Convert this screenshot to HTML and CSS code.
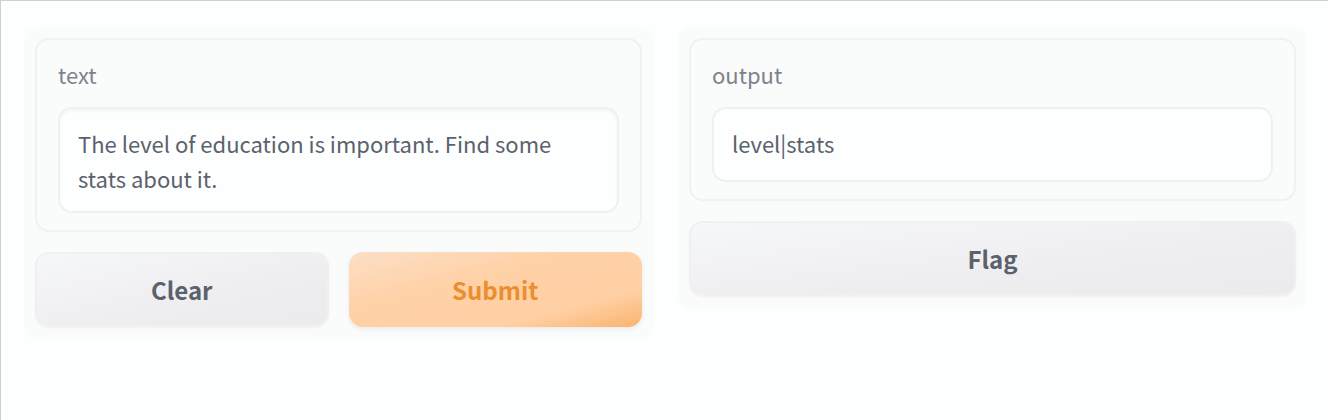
FILE: index.html
```html
<!DOCTYPE html>
<html lang="en">
<head>
<meta charset="utf-8">
<meta name="viewport" content="width=device-width, initial-scale=1">
<title>Text interface</title>
<link rel="stylesheet" href="styles.css">
</head>
<body>
<main class="app">
  <form class="panel">
    <div class="block">
      <label class="label" for="text">text</label>
      <textarea class="field field-input" id="text" rows="2">The level of education is important. Find some stats about it.</textarea>
    </div>
    <div class="actions">
      <button class="button" type="button">Clear</button>
      <button class="button button-primary" type="button">Submit</button>
    </div>
  </form>
  <section class="panel">
    <div class="block">
      <label class="label" for="output">output</label>
      <input class="field" id="output" type="text" value="level|stats" readonly>
    </div>
    <div class="actions">
      <button class="button" type="button">Flag</button>
    </div>
  </section>
</main>
</body>
</html>
```
FILE: styles.css
```css
* {
  box-sizing: border-box;
}

body {
  margin: 0;
  min-height: 100vh;
  border-top: 1px solid #d0d0d1;
  border-left: 1px solid #d0d0d1;
  background: #fdfefe;
  color: #5b616d;
  font-family: "Noto Sans CJK SC", "Noto Sans", sans-serif;
}

.app {
  display: flex;
  flex-wrap: wrap;
  align-items: flex-start;
  gap: 25px;
  padding: 27px 21px 27px 23px;
}

.panel {
  display: flex;
  flex: 1 1 360px;
  flex-direction: column;
  gap: 20px;
  min-width: 0;
  padding: 10px 11px 12px;
  border-radius: 12px;
  background: #fafbfb;
}

.block {
  display: flex;
  flex-direction: column;
  gap: 15px;
  padding: 16px 21px 17px;
  border: 2px solid #f1f1f4;
  border-radius: 14px;
}

.label {
  color: #7d828c;
  font-size: 22px;
  line-height: 36px;
}

.field {
  display: block;
  width: 100%;
  height: 75px;
  margin: 0;
  padding: 16px 18px 20px;
  border: 2px solid #f0f0f3;
  border-radius: 14px;
  outline: none;
  background: #fdfefe;
  color: inherit;
  font: inherit;
  font-size: 22px;
  line-height: 35px;
}

.field-input {
  height: 106px;
  padding: 17px 18px 15px;
  overflow: hidden;
  resize: none;
  box-shadow: inset 0 2px 3px #f3f4f6;
}

.actions {
  display: flex;
  gap: 20px;
}

.button {
  flex: 1 1 0;
  height: 75px;
  padding: 0 20px;
  border: 2px solid #f0f0f2;
  border-radius: 14px;
  background: linear-gradient(to bottom right, #f6f7f9, #eeeef1 60%, #ebebee);
  box-shadow: 0 1px 2px #f0f0f3;
  color: #5b616d;
  font: inherit;
  font-size: 24px;
  font-weight: 700;
  line-height: 36px;
  cursor: pointer;
}

.button-primary {
  border-color: transparent;
  background: linear-gradient(to bottom right, #fbdfc6, #ffd1a6 40%, #ffd0a4 75%, #f9b36c) border-box;
  box-shadow: 0 2px 4px #e9eaee;
  color: #ec8e30;
}
```
